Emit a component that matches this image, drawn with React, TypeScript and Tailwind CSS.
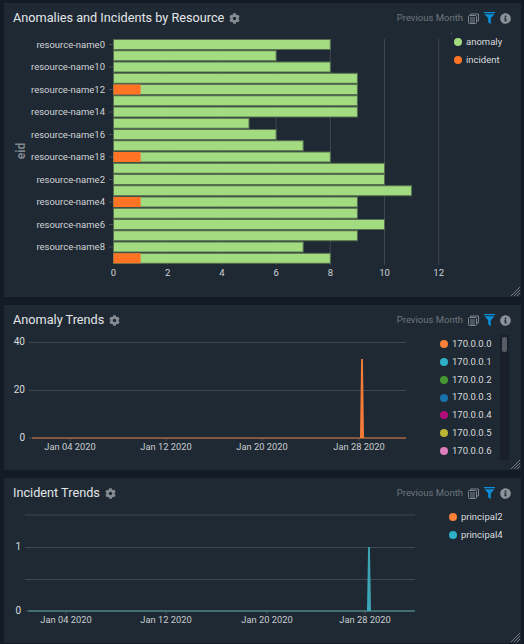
import type { ReactNode } from "react";
import { FaCog, FaInfoCircle } from "react-icons/fa";

const font = "Roboto, sans-serif";
const rows: [number, number][] = [
  [8, 0], [6, 0], [8, 0], [9, 0], [9, 1], [9, 0], [9, 0], [5, 0], [6, 0], [7, 0],
  [8, 1], [10, 0], [10, 0], [11, 0], [9, 1], [9, 0], [10, 0], [9, 0], [7, 0], [8, 1],
];
const resourceLabels = ["resource-name0", "resource-name10", "resource-name12", "resource-name14", "resource-name16", "resource-name18", "resource-name2", "resource-name4", "resource-name6", "resource-name8"];
const unit = 27.1;

function StackIcon() {
  return (
    <svg width="11" height="11" viewBox="0 0 11 11" fill="none" stroke="#7d858d" strokeWidth="1">
      <path d="M2.5 2.5V1h8v7H9" />
      <rect x="0.5" y="2.5" width="8" height="8" fill="#1f2933" rx="1" />
      <path d="M2 5h5M2 7h5M2 9h5" />
    </svg>
  );
}

function FilterIcon() {
  return (
    <svg width="11" height="12" viewBox="0 0 11 12" fill="#0b8fd9">
      <path d="M0 0h11v1.2H0zM0.6 2.2h9.8L6.8 6.2V12l-2.6-1.6V6.2z" />
    </svg>
  );
}

function Panel({ title, height, children }: { title: string; height: string; children: ReactNode }) {
  return (
    <section className={`relative flex flex-col bg-[#1f2933] ${height}`}>
      <header className="flex h-[30px] shrink-0 items-center pl-[9px] pr-[10px]">
        <h2 className="text-[12.7px] leading-none text-[#e3e6e8]">{title}</h2>
        <FaCog className="ml-[5px] h-[11px] w-[11px] text-[#868c92]" />
        <span className="ml-auto text-[9.5px] text-[#6d767f]">Previous Month</span>
        <span className="ml-[5px] flex items-center gap-[5px]">
          <StackIcon />
          <FilterIcon />
          <FaInfoCircle className="h-[11px] w-[11px] text-[#8b9198]" />
        </span>
      </header>
      {children}
      <svg className="absolute bottom-[1px] right-[1px]" width="9" height="9" viewBox="0 0 9 9" stroke="#8a9097" strokeWidth="0.8">
        <path d="M0 9L9 0M3 9L9 3M6 9L9 6" />
      </svg>
    </section>
  );
}

function LegendItem({ color, label }: { color: string; label: string }) {
  return (
    <li className="flex h-[18px] items-center gap-[4px] text-[9.5px] text-[#d9dcde]">
      <span className="h-[8px] w-[8px] rounded-full" style={{ backgroundColor: color }} />
      {label}
    </li>
  );
}

function BarChart() {
  return (
    <svg width="440" height="250" viewBox="4 33 440 250" className="shrink-0" fontFamily={font}>
      {[2, 4, 6, 8, 10, 12].map((t) => (
        <line key={t} x1={113.5 + t * unit} x2={113.5 + t * unit} y1="39" y2="265" stroke="#3f464d" />
      ))}
      {rows.map(([total, orange], i) => {
        const y = 39.5 + i * 11.25;
        return (
          <g key={i}>
            <rect x="113.5" y={y} width={total * unit} height="10" fill="#a3dc80" stroke="#556e50" />
            {orange > 0 && <rect x="113.5" y={y} width={orange * unit} height="10" fill="#ff7324" />}
          </g>
        );
      })}
      {resourceLabels.map((label, i) => (
        <g key={label}>
          <line x1="109" x2="113" y1={44.5 + i * 22.5} y2={44.5 + i * 22.5} stroke="#4a5159" />
          <text x="105" y={47.7 + i * 22.5} textAnchor="end" fontSize="9.5" fill="#d0d3d6">
            {label}
          </text>
        </g>
      ))}
      {[0, 2, 4, 6, 8, 10, 12].map((t) => (
        <text key={t} x={113.5 + t * unit} y="275.5" textAnchor="middle" fontSize="9.5" fill="#d0d3d6">
          {t}
        </text>
      ))}
      <text x="25" y="151" transform="rotate(-90 25 151)" textAnchor="middle" fontSize="12" fontWeight="700" fill="#7f868d">
        eid
      </text>
    </svg>
  );
}

function TrendChart({
  top,
  width,
  height,
  startX,
  endX,
  gridY,
  yLabels,
  yLabelX,
  ticks,
  spikeX,
  spikeTop,
  baseColor,
  spikeColor,
}: {
  top: number;
  width: number;
  height: number;
  startX: number;
  endX: number;
  gridY: number[];
  yLabels: [string, number][];
  yLabelX: number;
  ticks: [string, number][];
  spikeX: number;
  spikeTop: number;
  baseColor: string;
  spikeColor: string;
}) {
  const baseY = gridY[gridY.length - 1];
  return (
    <svg width={width} height={height} viewBox={`4 ${top} ${width} ${height}`} className="shrink-0" fontFamily={font}>
      {gridY.map((y) => (
        <line key={y} x1={startX} x2={endX} y1={y} y2={y} stroke="#40474d" />
      ))}
      {yLabels.map(([label, y]) => (
        <text key={label} x={yLabelX} y={y + 3.2} textAnchor="end" fontSize="10" fill="#d9dcde">
          {label}
        </text>
      ))}
      {ticks.map(([label, x]) => (
        <g key={label}>
          <line x1={x} x2={x} y1={baseY} y2={baseY + 3} stroke="#4a5159" />
          <text x={x} y={baseY + 12.3} textAnchor="middle" fontSize="9.3" fill="#c9cdd1">
            {label}
          </text>
        </g>
      ))}
      <line x1={startX + 3} x2={endX} y1={baseY} y2={baseY} stroke={baseColor} strokeWidth="1.6" />
      <path d={`M${spikeX - 2} ${baseY}L${spikeX - 0.9} ${spikeTop}H${spikeX + 0.9}L${spikeX + 2} ${baseY}Z`} fill={spikeColor} />
    </svg>
  );
}

const anomalyLegend: [string, string][] = [
  ["#fb8139", "170.0.0.0"],
  ["#2fb0c6", "170.0.0.1"],
  ["#46972f", "170.0.0.2"],
  ["#1a72ad", "170.0.0.3"],
  ["#b30d7a", "170.0.0.4"],
  ["#bdb334", "170.0.0.5"],
  ["#de7fbd", "170.0.0.6"],
];

export default function App() {
  return (
    <div className="flex h-[644px] w-[524px] flex-col gap-[8px] overflow-hidden bg-[#131c26] pb-[1px] pl-[4px] pr-[3px] pt-[3px]" style={{ fontFamily: font }}>
      <Panel title="Anomalies and Incidents by Resource" height="h-[294px]">
        <div className="flex">
          <BarChart />
          <div className="ml-[10px] flex flex-col">
            <span className="ml-[-3px] h-[1px] w-[1px] bg-[#6a7178]" />
            <ul className="mt-[-1px]">
              <LegendItem color="#a3dc80" label="anomaly" />
              <LegendItem color="#ff7324" label="incident" />
            </ul>
          </div>
        </div>
      </Panel>

      <Panel title="Anomaly Trends" height="h-[165px]">
        <div className="flex">
          <TrendChart
            top={335}
            width={436}
            height={125}
            startX={29}
            endX={406}
            gridY={[342.5, 390.5, 438]}
            yLabels={[["40", 342], ["20", 390], ["0", 438]]}
            yLabelX={25}
            ticks={[["Jan 04 2020", 70], ["Jan 12 2020", 166], ["Jan 20 2020", 262], ["Jan 28 2020", 359]]}
            spikeX={362}
            spikeTop={359}
            baseColor="#a5643c"
            spikeColor="#f47c37"
          />
          <ul className="flex h-[125px] w-[60px] flex-col overflow-hidden">
            {anomalyLegend.map(([color, label]) => (
              <LegendItem key={label} color={color} label={label} />
            ))}
          </ul>
          <div className="h-[125px] w-[9px] bg-[#192029] px-[2px] pt-[2px]">
            <div className="h-[15px] rounded-[2px] bg-[#565d65]" />
          </div>
        </div>
      </Panel>

      <Panel title="Incident Trends" height="h-[165px]">
        <div className="flex">
          <TrendChart
            top={508}
            width={445}
            height={125}
            startX={25}
            endX={415}
            gridY={[515, 547.5, 579.5, 611]}
            yLabels={[["1", 547], ["0", 610.5]]}
            yLabelX={21}
            ticks={[["Jan 04 2020", 66], ["Jan 12 2020", 166], ["Jan 20 2020", 267], ["Jan 28 2020", 365]]}
            spikeX={369}
            spikeTop={547}
            baseColor="#4a8088"
            spikeColor="#3ca6b6"
          />
          <ul className="flex flex-col">
            <LegendItem color="#fb8139" label="principal2" />
            <LegendItem color="#2fb0c6" label="principal4" />
          </ul>
        </div>
      </Panel>
    </div>
  );
}
